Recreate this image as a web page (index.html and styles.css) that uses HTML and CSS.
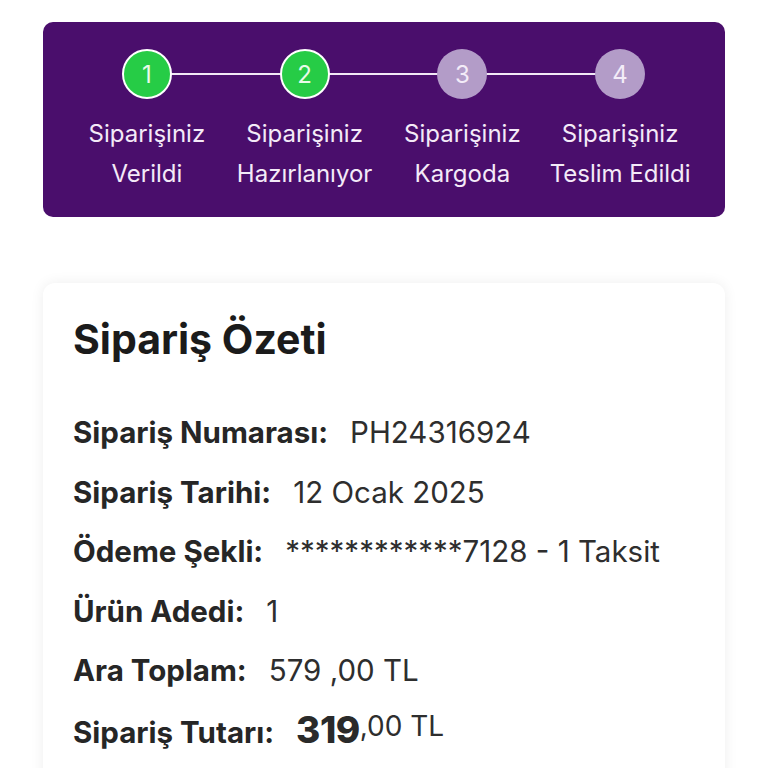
FILE: index.html
```html
<!DOCTYPE html>
<html lang="tr">
<head>
<meta charset="utf-8">
<link rel="stylesheet" href="styles.css">
</head>
<body>
<div class="page">
  <div class="tracker">
    <div class="steps">
      <div class="step done">
        <div class="dot-row"><span class="dot">1</span></div>
        <div class="label">Siparişiniz<br>Verildi</div>
      </div>
      <div class="step done">
        <div class="dot-row"><span class="dot">2</span></div>
        <div class="label">Siparişiniz<br>Hazırlanıyor</div>
      </div>
      <div class="step">
        <div class="dot-row"><span class="dot">3</span></div>
        <div class="label">Siparişiniz<br>Kargoda</div>
      </div>
      <div class="step last">
        <div class="dot-row"><span class="dot">4</span></div>
        <div class="label">Siparişiniz<br>Teslim Edildi</div>
      </div>
    </div>
  </div>

  <div class="card">
    <h1 class="title">Sipariş Özeti</h1>
    <div class="row"><span class="key">Sipariş Numarası:</span><span class="val">PH24316924</span></div>
    <div class="row"><span class="key">Sipariş Tarihi:</span><span class="val">12 Ocak 2025</span></div>
    <div class="row"><span class="key">Ödeme Şekli:</span><span class="val">************7128 - 1 Taksit</span></div>
    <div class="row"><span class="key">Ürün Adedi:</span><span class="val">1</span></div>
    <div class="row"><span class="key">Ara Toplam:</span><span class="val">579 ,00 TL</span></div>
    <div class="row"><span class="key">Sipariş Tutarı:</span><span class="val total"><span class="big">319</span><span class="cents">,00 TL</span></span></div>
  </div>
</div>
</body>
</html>
```

FILE: styles.css
```css
* { box-sizing: border-box; }
html, body { margin: 0; padding: 0; background: #ffffff; }
body { font-family: Inter, Roboto, "Liberation Sans", sans-serif; }

.page {
  padding: 22px 43px 0 43px;
}

.tracker {
  background: #4a0e6c;
  border-radius: 10px;
  padding: 27px 26px 20px 25px;
  height: 195px;
}

.steps {
  display: grid;
  grid-template-columns: repeat(4, 1fr);
}

.step { display: flex; flex-direction: column; align-items: center; }

.dot-row {
  position: relative;
  width: 100%;
  height: 50px;
  display: flex;
  justify-content: center;
}
.step:not(.last) .dot-row::after {
  content: "";
  position: absolute;
  left: 50%;
  right: -50%;
  top: 24px;
  height: 2px;
  background: #f2e8f6;
}

.dot {
  position: relative;
  z-index: 1;
  width: 50px;
  height: 50px;
  border-radius: 50%;
  background: #b39cc8;
  color: #f3ecf8;
  font-size: 24px;
  display: flex;
  align-items: center;
  justify-content: center;
}
.done .dot {
  background: #26cc46;
  border: 2px solid #ffffff;
  color: #e9fbe9;
}

.label {
  margin-top: 15px;
  color: #f4eaf8;
  font-size: 24px;
  line-height: 40px;
  text-align: center;
  white-space: nowrap;
}

.card {
  margin-top: 66px;
  background: #ffffff;
  border-radius: 12px;
  box-shadow: 0 0 14px rgba(0,0,0,0.07);
  padding: 32px 30px 20px 30px;
  min-height: 520px;
}

.title {
  margin: 0 0 49px 0;
  font-size: 41px;
  font-weight: 700;
  color: #1b1b1b;
  line-height: 48px;
}

.row {
  display: flex;
  align-items: baseline;
  gap: 22px;
  height: 59.5px;
  font-size: 29.5px;
  line-height: 40px;
}

.key { font-weight: 700; color: #262626; }
.val { color: #2e2e2e; }

.total { display: flex; align-items: baseline; }
.big { font-size: 37px; font-weight: 800; color: #2a2a2a; letter-spacing: -0.5px; }
.cents { font-size: 28px; position: relative; top: -7px; }
```
